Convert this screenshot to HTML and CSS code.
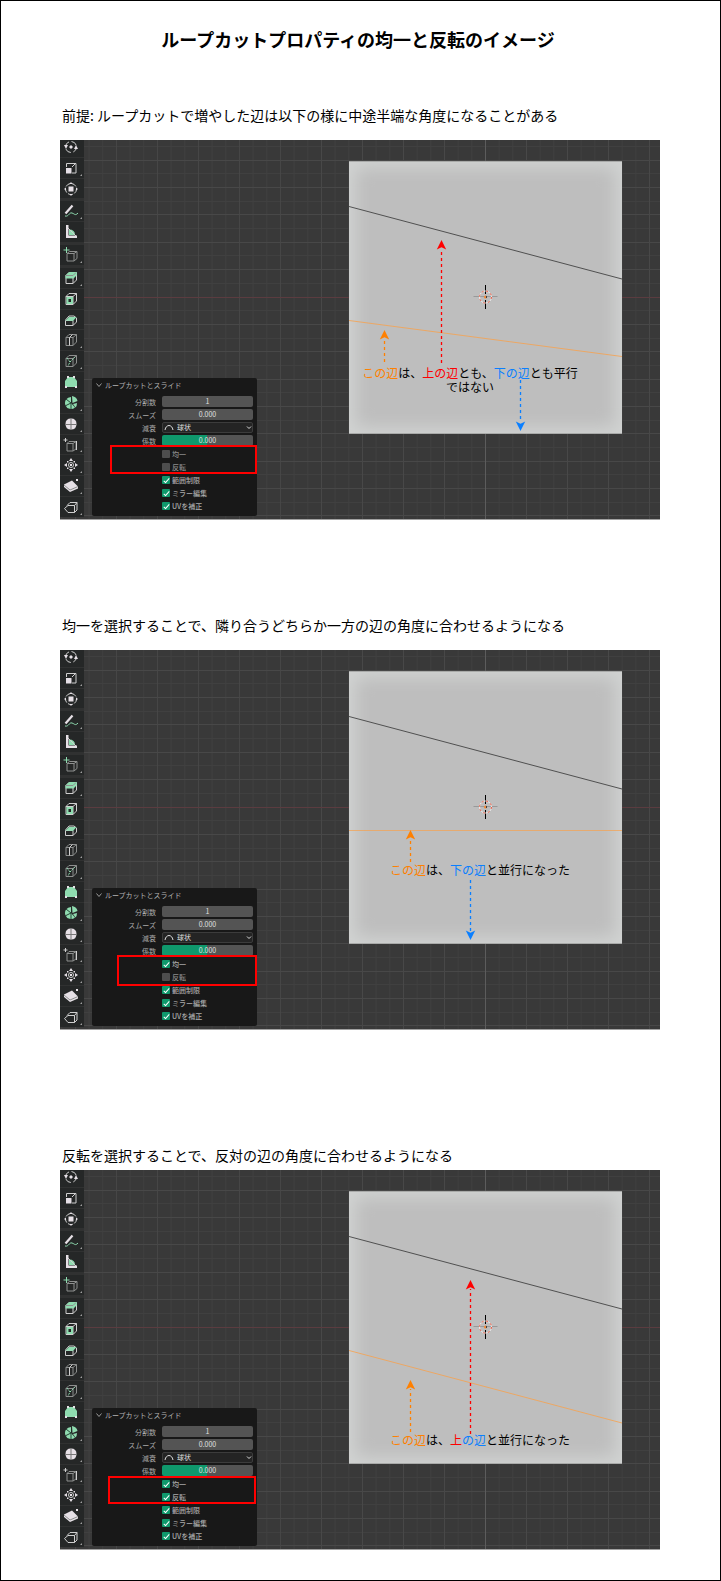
FILE: index.html
```html
<!DOCTYPE html>
<html lang="ja">
<head>
<meta charset="utf-8">
<meta name="viewport" content="width=device-width, initial-scale=1">
<title>ループカットプロパティの均一と反転のイメージ</title>
<link rel="stylesheet" href="styles.css">
</head>
<body>
<main class="page">
  <h1 class="title">ループカットプロパティの均一と反転のイメージ</h1>

  <section class="step">
    <h2 class="caption">前提: ループカットで増やした辺は以下の様に中途半端な角度になることがある</h2>
    <div class="viewport" data-even="0" data-flip="0" data-mark="free">
      <svg class="cube" viewBox="0 0 273 273">
        <use href="#face"/>
        <path class="edge-new" d="M0 159.500L273 195.500"/>
        <g class="red"><path class="shaft" d="M92.500 202V88"/><use href="#head" x="92.500" y="79"/></g>
        <g class="orange"><path class="shaft" d="M35.500 201V178"/><use href="#head" x="35.500" y="169"/></g>
        <g class="blue"><path class="shaft" d="M171.500 219V261"/><use href="#head-down" x="171.500" y="270"/></g>
        <text class="note" x="121" y="217"><tspan class="orange">この辺</tspan>は、<tspan class="red">上の辺</tspan>とも、<tspan class="blue">下の辺</tspan>とも平行</text>
        <text class="note" x="121" y="231">ではない</text>
      </svg>
    </div>
  </section>

  <section class="step step-even">
    <h2 class="caption">均一を選択することで、隣り合うどちらか一方の辺の角度に合わせるようになる</h2>
    <div class="viewport" data-even="1" data-flip="0" data-mark="even">
      <svg class="cube" viewBox="0 0 273 273">
        <use href="#face"/>
        <path class="edge-new faint" d="M0 159.500H273"/>
        <g class="orange"><path class="shaft" d="M61.500 191V168"/><use href="#head" x="61.500" y="159"/></g>
        <g class="blue"><path class="shaft" d="M121.500 209V261"/><use href="#head-down" x="121.500" y="269"/></g>
        <text class="note" x="131" y="204"><tspan class="orange">この辺</tspan>は、<tspan class="blue">下の辺</tspan>と並行になった</text>
      </svg>
    </div>
  </section>

  <section class="step step-flip">
    <h2 class="caption">反転を選択することで、反対の辺の角度に合わせるようになる</h2>
    <div class="viewport" data-even="1" data-flip="1" data-mark="flip">
      <svg class="cube" viewBox="0 0 273 273">
        <use href="#face"/>
        <path class="edge-new" d="M0 159.500L273 232"/>
        <g class="orange"><path class="shaft" d="M61.500 241V198"/><use href="#head" x="61.500" y="189"/></g>
        <g class="red"><path class="shaft" d="M121.500 243V98"/><use href="#head" x="121.500" y="89"/></g>
        <text class="note" x="131" y="254"><tspan class="orange">この辺</tspan>は、<tspan class="red">上</tspan><tspan class="blue">の辺</tspan>と並行になった</text>
      </svg>
    </div>
  </section>
</main>

<svg class="defs" aria-hidden="true">
  <defs>
    <filter id="soft" x="-10%" y="-10%" width="120%" height="120%"><feGaussianBlur stdDeviation="8"/></filter>
    <clipPath id="face-clip"><rect width="273" height="273"/></clipPath>
    <g id="face">
      <rect width="273" height="273" fill="#d0d2d1"/>
      <g clip-path="url(#face-clip)"><rect x="7" y="7" width="259" height="259" rx="8" fill="#bebebe" filter="url(#soft)"/></g>
      <path d="M0 .5H273M0 272.500H273" stroke="#a9aaa9"/>
      <path d="M0 45.500L273 118" stroke="#333" stroke-width=".8" fill="none"/>
      <path d="M124.500 135.500H148.500" stroke="#999"/>
      <path d="M136.500 124V133M136.500 139V148" stroke="#000"/>
      <circle cx="136.500" cy="136" r="6" fill="none" stroke="#eee"/>
      <circle cx="136.500" cy="136" r="6" fill="none" stroke="#f0553a" stroke-dasharray="2 2.700"/>
      <circle cx="136.500" cy="136" r="1.600" fill="#f08a3a"/>
      <path d="M137 135h1v2h-1z" fill="#444"/>
    </g>
    <path id="head" d="M0 0L4.700 9.500L0 7.300L-4.700 9.500Z" fill="currentColor"/>
    <path id="head-down" d="M0 0L4.700 -9.500L0 -7.300L-4.700 -9.500Z" fill="currentColor"/>
  </defs>
</svg>
<script src="script.js"></script>
</body>
</html>
```
FILE: styles.css
```css
* { box-sizing: border-box; }

body {
  margin: 0;
  background: #fff;
  color: #000;
  font-family: "Noto Sans CJK JP", sans-serif;
}

.page {
  border: 1px solid #000;
  padding: 24px 60px 30px 59px;
}

.title {
  margin: 0 0 52px;
  padding-right: 4px;
  font-size: 18px;
  line-height: 28px;
  font-weight: 700;
  text-align: center;
}

.step-even { margin-top: 95px; }
.step-flip { margin-top: 115px; }

.caption {
  margin: 0 0 15px;
  padding-left: 2px;
  font-size: 14px;
  line-height: 20px;
  font-weight: 400;
}
.step-flip .caption { margin-bottom: 5px; }

.viewport {
  position: relative;
  display: flex;
  height: 380px;
  overflow: hidden;
  background: #393939;
  border-bottom: 1px solid #a2a2a2;
}

.grid {
  position: absolute;
  inset: 0;
  width: 100%;
  height: 100%;
}
.grid path { fill: none; }
.minor { stroke: #404040; }
.major { stroke: #484848; }
.center { stroke: #5c5c5c; }
.axis { stroke: #5b3c40; }

/* tool shelf */
.tools {
  position: relative;
  display: flex;
  flex-direction: column;
  gap: 1px;
  width: 24px;
  height: 380px;
  margin-top: -3px;
  background: #303131;
}
.tool {
  position: relative;
  display: flex;
  flex: 1;
  align-items: center;
  min-height: 0;
  padding: 0 0 0 3px;
  border: 0;
  background: #252727;
}
.tool.last { margin-bottom: 2px; }
.tool svg {
  width: 16px;
  height: 16px;
  flex: none;
  fill: none;
  stroke: #cfcfcf;
}
.tool .w { fill: #e6e0e6; stroke: none; }
.tool .g { fill: #8fdcb0; stroke: none; }
.tool .gl { stroke: #8fdcb0; }
.tool .d { stroke: #8d8f8e; }
.tool.more::after {
  content: "";
  position: absolute;
  right: 2px;
  bottom: 2px;
  border-left: 2px solid transparent;
  border-bottom: 2px solid #a0a0a0;
}

/* operator panel */
.panel {
  position: relative;
  align-self: flex-end;
  width: 165px;
  margin: 0 0 3px 8px;
  padding: 0 4px 4px 0;
  border-radius: 2px;
  background: #181818;
  color: #d4d4d4;
  font-size: 7px;
  line-height: 12px;
}
.panel-title {
  display: flex;
  align-items: center;
  gap: 3px;
  width: 100%;
  height: 14px;
  margin-bottom: 4px;
  padding: 0 0 0 4px;
  border: 0;
  background: none;
  color: #b4b4b4;
  font: inherit;
}
.panel-title svg { width: 6px; height: 6px; fill: none; stroke: #999; }
.rows { display: grid; gap: 1px; }
.row {
  display: grid;
  grid-template-columns: 64px 1fr;
  column-gap: 6px;
  height: 12px;
}
.row > label:first-child { text-align: right; color: #aaa; }
.field {
  display: block;
  width: 100%;
  height: 11px;
  padding: 0;
  border: 0;
  border-radius: 2px;
  background: #545454;
  color: #e0e0e0;
  font: inherit;
  line-height: 11px;
  text-align: center;
}
.factor { background: linear-gradient(90deg, #0f986c 49%, #545454 49%); }
.pick { position: relative; display: block; }
.pick .field {
  appearance: none;
  padding-left: 14px;
  border: 1px solid #3c3c3c;
  background: #242424;
  line-height: 9px;
  text-align: left;
}
.pick svg {
  position: absolute;
  inset: 0;
  width: 100%;
  height: 11px;
  fill: none;
  stroke: #ddd;
  pointer-events: none;
}
.row > .check {
  grid-column: 2;
  display: flex;
  align-items: center;
  gap: 2px;
  height: 11px;
  color: #e8e8e8;
  font-weight: 500;
  text-align: left;
}
.row > .check.off { color: #8c8c8c; }
.box {
  appearance: none;
  position: relative;
  width: 8px;
  height: 8px;
  margin: 0;
  border-radius: 1px;
  background: #4d4d4d;
}
.box:checked { background: #0f986c; }
.box:checked::after {
  content: "";
  position: absolute;
  left: 3px;
  top: 1px;
  width: 2px;
  height: 5px;
  border: solid #fff;
  border-width: 0 1px 1px 0;
  transform: rotate(42deg);
}

/* red frame round the options being explained */
.mark { position: absolute; border: 2px solid #f00; pointer-events: none; }
.mark-free { left: 18px; right: 0; top: 67px; height: 29px; }
.mark-even { left: 25px; right: 0; top: 67px; height: 31px; }
.mark-flip { left: 16px; right: 1px; top: 68px; height: 28px; }

.cube {
  position: relative;
  flex: none;
  width: 273px;
  height: 273px;
  margin: 21px 38px 0 auto;
}
.edge-new { stroke: #f7a14d; stroke-width: .8; fill: none; }
.faint { opacity: .7; stroke-width: 1; }
.shaft { fill: none; stroke: currentColor; stroke-width: 1.3; stroke-dasharray: 3 3; }
.orange { color: #ff8000; }
.red { color: #f00; }
.blue { color: #0a7fff; }
.note { font-size: 12px; text-anchor: middle; fill: #000; }
.note tspan { fill: currentColor; }

.defs { position: absolute; width: 0; height: 0; }
```
FILE: script.js
```js
const cubeBox = '<path d="M3 5.500H10V13.500H3ZM3 5.500L6 2.500H13.500V10L10 13.500M10 5.500L13.500 2.500"/>';

// Each tool: drawing, whether it opens a sub-menu, whether it ends a group.
const tools = [
  ['<circle cx="8" cy="8" r="5.500" stroke-dasharray="6 2.600"/><path class="w" d="M1 6h4l-2 4zM11 10h4l-2-4zM8 6l2 2-2 2-2-2z"/>', 0, 0],
  ['<path d="M3.500 7V3.500H13V13H9M9 7L12 4"/><path class="w" d="M3 8h5.500v5.500H3z"/>', 1, 0],
  ['<circle cx="8" cy="8" r="5.500" stroke-dasharray="5 1.500"/><path class="w" d="M5.500 5.500h5v5h-5zM8 1l1.500 2h-3zM8 15l1.500-2h-3zM1 8l2-1.500v3zM15 8l-2-1.500v3z"/>', 0, 1],
  ['<path d="M2.500 10.500L9.500 2.500" stroke="#e6e0e6" stroke-width="2.200"/><path class="gl" d="M2 13C6 14 6 9 9 10S12 13 15 10"/>', 1, 0],
  ['<path class="w" d="M3 1h2.500v10.500H14V14H3z"/><path class="g" d="M6 5.500q6 0 6 5.500H6z"/><path d="M5 4L13 12"/>', 0, 1],
  ['<path class="d" d="M4 6.500H11V14H4ZM4 6.500L6.500 4.500H14V11.500L11 14M11 6.500L14 4.500"/><path class="gl" d="M3.500 0V6M.5 3H6.500"/>', 1, 1],
  [cubeBox + '<path class="g" d="M2.500 5.500L6 2h8v3l-3.500 3.500h-8z"/><path class="d" d="M3 5.500H10L13 2.500" stroke="#406b53"/>', 1, 0],
  [cubeBox + '<path class="g" fill-rule="evenodd" d="M3.500 6h6.500v7H3.500zM5.500 8v3H8V8z"/>', 0, 0],
  ['<path d="M2.500 8.500H10V13.500H2.500ZM10 13.500L13.500 10V6M2.500 8L6 4H11L13.500 6"/><path class="g" d="M2.500 8.500L6 5h7.500L10 9z"/>', 0, 0],
  ['<path class="d" d="M3 5.500H10V13.500H3ZM3 5.500L6 2.500H13.500V10L10 13.500M10 5.500L13.500 2.500"/><path d="M6.500 13.500V5.500L9.500 2.500"/>', 1, 0],
  ['<path class="d" d="M3 5.500H10V13.500H3ZM3 5.500L6 2.500H13.500V10L10 13.500M10 5.500L13.500 2.500"/><path class="gl" stroke-dasharray="2 1" d="M4 5L7 9L5 13M7 9L12 4"/>', 1, 0],
  ['<path class="g" d="M5 3h6l3 4v6H2V7z"/><path class="w" d="M4 2h2v2H4zM10 2h2v2h-2zM2 12h2v2H2zM12 12h2v2h-2z"/>', 0, 0],
  ['<path class="g" d="M8 2A6 6 0 1 0 12 12.500L8 8zM9 1q5 1 5.500 5L9.500 8zM10 9l4-1q0 3-1.500 4.500z"/><path stroke="#244436" d="M8 8V14M8 8L3 4M8 8L2 11"/>', 1, 0],
  ['<path class="w" d="M2.500 8q0-5.500 5.500-5.500T13.500 8 8 13.500 2.500 8z"/><path stroke="#777" d="M3 8.500H13M8 3V13"/>', 1, 0],
  ['<path class="d" d="M4 6.500H10V14H4ZM4 6.500L6 4.500H13V12L10 14M10 6.500L13 4.500"/><path d="M13.500 4V13M2.500 1V5M.5 3H4.500"/>', 1, 0],
  ['<circle cx="8" cy="8" r="2.500"/><path class="w" d="M8 1l2 3H6zM8 15l2-3H6zM1 8l3-2v4zM15 8l-3-2v4zM7 7h2v2H7zM4 4h1.500v1.500H4zM10.500 4H12v1.500h-1.500zM4 10.500h1.500V12H4zM10.500 10.500H12V12h-1.500z"/>', 1, 0],
  ['<path class="w" d="M1 6.500l8-4 6 6v2l-8 3.500-6-5z"/><path class="d" d="M1 7L7 12L15 8.500"/><path class="w" d="M13 1h2v2h-2z"/>', 1, 0],
  ['<path d="M5 6.500H11.500V13.500H5L1.500 9.500ZM4 6.500L7 3.500H14V11L11.500 13.500M11.500 6.500L14 3.500"/>', 1, 0],
];
const names = ['回転', 'スケール', 'トランスフォーム', 'アノテート', 'メジャー', '立方体を追加', '押し出し', '面を差し込む', 'ベベル',
  'ループカット', 'ナイフ', 'ポリビルド', 'スピン', 'スムーズ', '辺をスライド', '収縮/膨張', 'せん断', '領域リップ'];

const STEP = 13.67;

// Lines run leftwards from the right edge so the centre stays behind the cube.
function grid() {
  let minor = '', major = '';
  for (let i = -12; i <= 120; i++) {
    const x = (-174.5 - i * STEP).toFixed(1);
    if (i % 3 === 0) major += `M${x} 0V380`; else minor += `M${x} 0V380`;
  }
  for (let i = -11; i <= 16; i++) {
    const y = Math.floor(157 + i * STEP) + 0.5;
    if (i % 2 === 0) major += `M-2000 ${y}H0`; else minor += `M-2000 ${y}H0`;
  }
  return `<svg class="grid" aria-hidden="true"><svg x="100%" overflow="visible">
    <path class="minor" d="${minor}"/><path class="major" d="${major}"/>
    <path class="axis" d="M-2000 157.5H0"/><path class="center" d="M-174.500 0V380"/></svg></svg>`;
}

function shelf() {
  return '<div class="tools">' + tools.map(([art, more, last], i) =>
    `<button type="button" class="tool${more ? ' more' : ''}${last ? ' last' : ''}" aria-label="${names[i]}"><svg viewBox="0 0 16 16">${art}</svg></button>`
  ).join('') + '</div>';
}

function check(text, on) {
  return `<div class="row"><label class="check${on ? '' : ' off'}"><input class="box" type="checkbox"${on ? ' checked' : ''}>${text}</label></div>`;
}

function panel(n, even, flip, mark) {
  const input = (key, label, value, cls = '') =>
    `<div class="row"><label for="${key}${n}">${label}</label><input class="field ${cls}" id="${key}${n}" value="${value}"></div>`;
  return `<div class="panel">
    <button type="button" class="panel-title"><svg viewBox="0 0 6 6"><path d="M.5 1.500L3 4.500L5.500 1.500"/></svg>ループカットとスライド</button>
    <div class="rows">
      ${input('cuts', '分割数', '1')}
      ${input('smooth', 'スムーズ', '0.000')}
      <div class="row"><label for="falloff${n}">減衰</label><span class="pick"><select class="field" id="falloff${n}"><option>球状</option></select>
        <svg viewBox="0 0 91 11"><path d="M3 8C4 2 10 2 11 8M85 4.500L87 6.500L89 4.500"/></svg></span></div>
      ${input('factor', '係数', '0.000', 'factor')}
      ${check('均一', even)}${check('反転', flip)}${check('範囲制限', true)}${check('ミラー編集', true)}${check('UVを補正', true)}
    </div>
    <div class="mark mark-${mark}"></div>
  </div>`;
}

document.querySelectorAll('.viewport').forEach((view, n) => {
  const { even, flip, mark } = view.dataset;
  view.insertAdjacentHTML('afterbegin', grid() + shelf() + panel(n, even === '1', flip === '1', mark));
});
```
